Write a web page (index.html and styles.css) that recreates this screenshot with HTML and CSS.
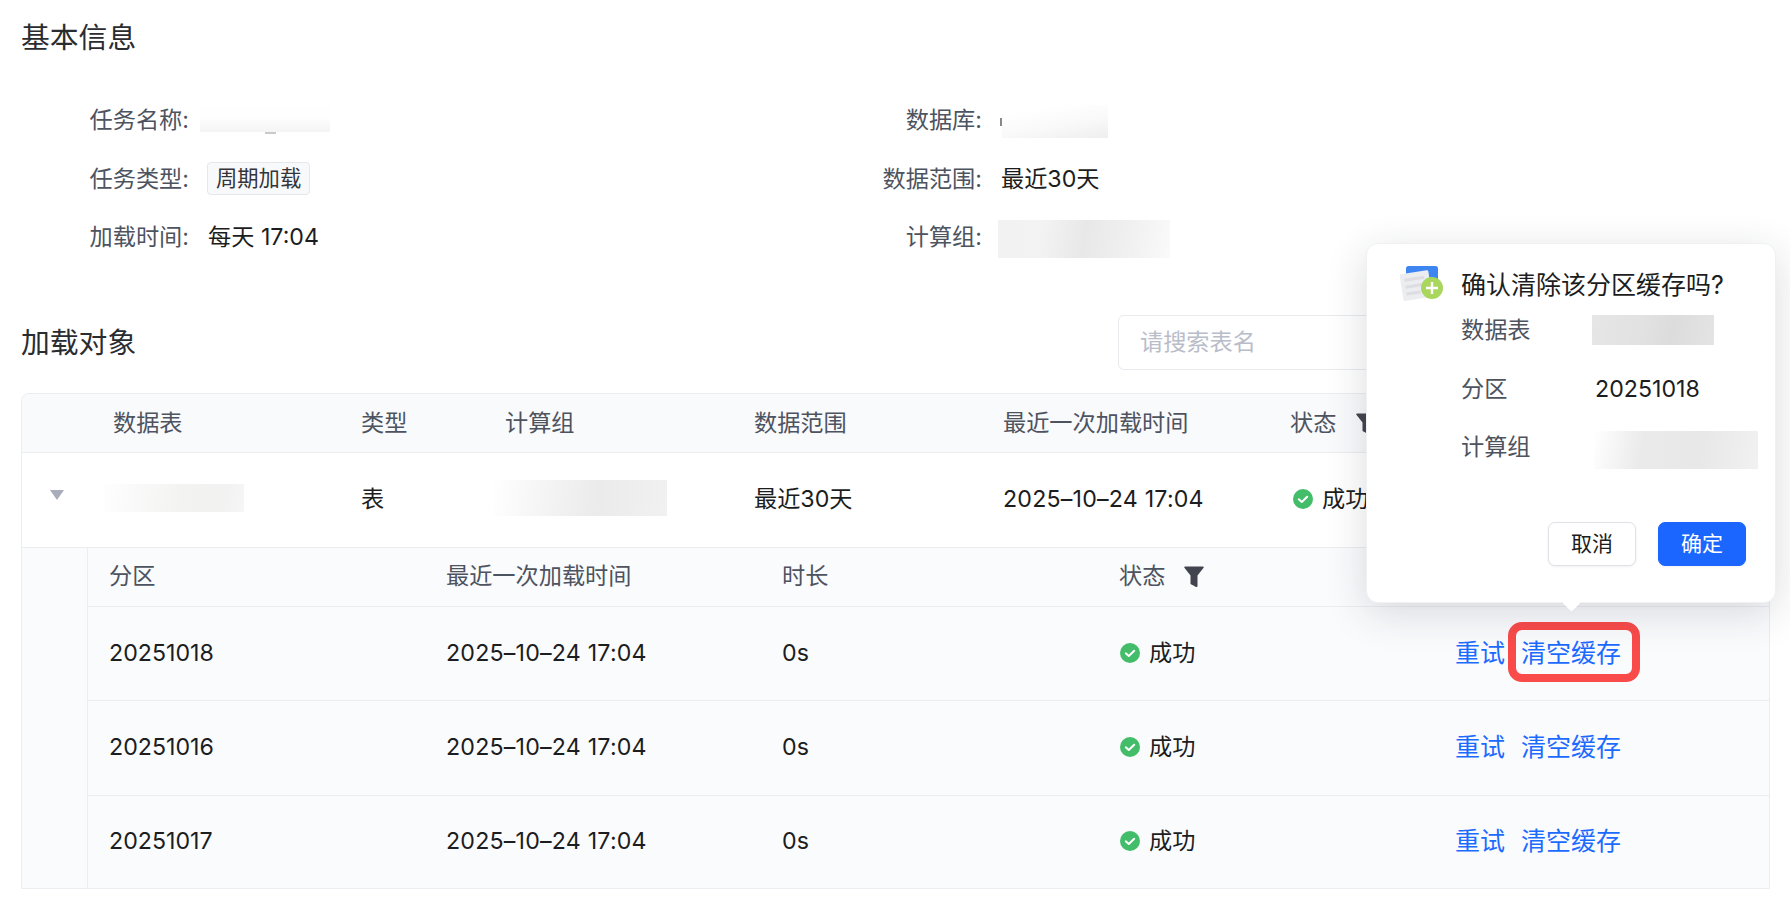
FILE: index.html
```html
<!DOCTYPE html>
<html lang="zh-CN">
<head>
<meta charset="utf-8">
<title>任务详情</title>
<link rel="stylesheet" href="styles.css">
</head>
<body>
<main class="page">
  <h2 class="section-title">基本信息</h2>
  <div class="desc">
    <span class="desc-label">任务名称:</span>
    <div class="desc-value"><span class="blur blur-name"><i class="blur-mark"></i></span></div>
    <span class="desc-label">数据库:</span>
    <div class="desc-value"><span class="blur blur-db"><i class="blur-dot"></i></span></div>
    <span class="desc-label">任务类型:</span>
    <div class="desc-value"><span class="tag">周期加载</span></div>
    <span class="desc-label">数据范围:</span>
    <div class="desc-value">最近30天</div>
    <span class="desc-label">加载时间:</span>
    <div class="desc-value">每天 17:04</div>
    <span class="desc-label">计算组:</span>
    <div class="desc-value"><span class="blur blur-group"></span></div>
  </div>

  <div class="toolbar">
    <h2 class="section-title">加载对象</h2>
    <div class="search">请搜索表名</div>
  </div>

  <section class="table">
    <div class="row row-head main-cols">
      <span></span><span>数据表</span><span>类型</span><span>计算组</span><span>数据范围</span><span>最近一次加载时间</span>
      <span class="status-head">状态<svg class="filter" viewBox="0 0 20 22"><path d="M1 0.5H19a.8.8 0 0 1 .6 1.3L13.5 9.5V20a1 1 0 0 1-1.5.9L7.5 18.5a1 1 0 0 1-1-1V9.5L.4 1.8A.8.8 0 0 1 1 .5Z"/></svg></span>
    </div>
    <div class="row row-main main-cols">
      <span class="expander"></span>
      <span><span class="blur blur-table"></span></span>
      <span>表</span>
      <span><span class="blur blur-table-group"></span></span>
      <span>最近30天</span>
      <span class="time">2025–10–24 17:04</span>
      <span class="status"><svg class="check" viewBox="0 0 20 20"><circle cx="10" cy="10" r="10"/><path d="M5.8 10.3l3 2.7 5.4-5.2"/></svg>成功</span>
    </div>
    <div class="sub">
      <div class="sub-gutter"></div>
      <div class="sub-table">
        <div class="sub-row sub-head sub-cols">
          <span>分区</span><span>最近一次加载时间</span><span>时长</span>
          <span class="status-head">状态<svg class="filter" viewBox="0 0 20 22"><path d="M1 0.5H19a.8.8 0 0 1 .6 1.3L13.5 9.5V20a1 1 0 0 1-1.5.9L7.5 18.5a1 1 0 0 1-1-1V9.5L.4 1.8A.8.8 0 0 1 1 .5Z"/></svg></span>
          <span></span>
        </div>
        <div class="sub-row sub-body sub-cols">
          <span>20251018</span><span class="time">2025–10–24 17:04</span><span>0s</span>
          <span class="status"><svg class="check" viewBox="0 0 20 20"><circle cx="10" cy="10" r="10"/><path d="M5.8 10.3l3 2.7 5.4-5.2"/></svg>成功</span>
          <span class="links"><a>重试</a><a>清空缓存</a></span>
        </div>
        <div class="sub-row sub-body sub-cols">
          <span>20251016</span><span class="time">2025–10–24 17:04</span><span>0s</span>
          <span class="status"><svg class="check" viewBox="0 0 20 20"><circle cx="10" cy="10" r="10"/><path d="M5.8 10.3l3 2.7 5.4-5.2"/></svg>成功</span>
          <span class="links"><a>重试</a><a>清空缓存</a></span>
        </div>
        <div class="sub-row sub-body sub-cols">
          <span>20251017</span><span class="time">2025–10–24 17:04</span><span>0s</span>
          <span class="status"><svg class="check" viewBox="0 0 20 20"><circle cx="10" cy="10" r="10"/><path d="M5.8 10.3l3 2.7 5.4-5.2"/></svg>成功</span>
          <span class="links"><a>重试</a><a>清空缓存</a></span>
        </div>
      </div>
    </div>
  </section>

  <div class="highlight"></div>

  <aside class="popover">
    <div class="pop-title">
      <svg class="pop-icon" viewBox="0 0 46 40">
        <rect x="8" y="3" width="32" height="27" rx="2.5" fill="#3d86f2"/>
        <g transform="rotate(-9 18 20)">
          <rect x="3" y="9" width="29" height="27" rx="1.5" fill="#ecedf0"/>
          <rect x="7" y="14" width="20" height="3" fill="#dcdee2"/>
          <rect x="7" y="21" width="20" height="3" fill="#dcdee2"/>
          <rect x="7" y="28" width="14" height="3" fill="#dcdee2"/>
        </g>
        <circle cx="34" cy="25" r="11" fill="#a9d65c"/>
        <path d="M34 19v12M28 25h12" stroke="#fff" stroke-width="2.4"/>
      </svg>
      <span>确认清除该分区缓存吗?</span>
    </div>
    <div class="pop-fields">
      <span class="pop-label">数据表</span><span><span class="blur blur-pop-table"></span></span>
      <span class="pop-label">分区</span><span class="pop-value">20251018</span>
      <span class="pop-label">计算组</span><span><span class="blur blur-pop-group"></span></span>
    </div>
    <div class="pop-actions">
      <button class="btn">取消</button>
      <button class="btn btn-primary">确定</button>
    </div>
  </aside>
</main>
</body>
</html>
```

FILE: styles.css
```css
* { box-sizing: border-box; }
html, body { margin: 0; background: #fff; }
body {
  font-family: Inter, "Noto Sans CJK SC", sans-serif;
  font-size: 23.2px;
  line-height: 30px;
  color: #1c1d20;
  overflow: hidden;
}
.page {
  position: relative;
  width: 1790px;
  height: 918px;
  padding: 20px 20px 0 21px;
}
.section-title {
  margin: 0;
  font-size: 28.8px;
  font-weight: 400;
  line-height: 36px;
  color: #2a2c30;
}
.desc {
  display: grid;
  grid-template-columns: 168px 587px 168px 1fr;
  grid-auto-rows: 58.5px;
  column-gap: 19px;
  align-items: center;
  margin-top: 34.75px;
}
.desc-label { text-align: right; color: #4e5360; }
.desc-value { display: flex; align-items: center; }
.blur { display: block; position: relative; }
.blur-name {
  width: 130px; height: 29px; margin: -5px 0 0 -8px;
  background: linear-gradient(180deg, #fff 0%, #fdfdfd 55%, #f4f4f4 100%);
}
.blur-mark {
  position: absolute; left: 65px; bottom: -2px;
  width: 11px; height: 2px; background: #c9c9c9;
}
.blur-db {
  width: 106px; height: 33px; margin: 3px 0 0 1px;
  background: linear-gradient(170deg, #fff 20%, #f9f9f9 60%, #eeeeee 100%);
}
.blur-dot {
  position: absolute; left: -2px; top: 13px;
  width: 2px; height: 8px;
  background: #888;
}
.blur-group {
  width: 172px; height: 38px; margin: 4px 0 0 -3px;
  background: linear-gradient(100deg, #f2f2f2 0%, #f3f3f3 25%, #e8e8e8 50%, #f0f0f0 75%, #fafafa 100%);
}
.tag {
  height: 33px;
  padding: 0 8px;
  margin-left: -1px;
  font-size: 21.3px;
  line-height: 31px;
  color: #33353a;
  background: #f8f9fb;
  border: 1px solid #e5e7eb;
  border-radius: 4px;
}
.toolbar {
  display: flex;
  justify-content: space-between;
  align-items: center;
  height: 55px;
  margin-top: 49px;
}
.search {
  width: 320px;
  height: 55px;
  margin-right: 332px;
  padding-left: 21px;
  line-height: 53px;
  color: #b9bdc9;
  background: #fff;
  border: 1px solid #e8eaee;
  border-radius: 6px;
}
.table {
  margin-top: 22.75px;
  width: 1749px;
  height: 496px;
  border: 1px solid #ebedf0;
  border-top-left-radius: 8px;
  border-top-right-radius: 8px;
  overflow: hidden;
}
.time { letter-spacing: 0.2px; }
.row { display: grid; align-items: center; }
.main-cols { grid-template-columns: 91px 248px 144px 249px 249px 289px 1fr; }
.row-head {
  height: 59px;
  background: #f9fafc;
  border-bottom: 1px solid #ebedf0;
  color: #4e5360;
}
.row-head .status-head { margin-left: -2px; gap: 20px; }
.row-main {
  height: 95px;
  padding-bottom: 2px;
  background: #fff;
  border-bottom: 1px solid #ebedf0;
}
.expander {
  width: 0; height: 0;
  margin-left: 28px;
  margin-top: -8px;
  border-left: 7px solid transparent;
  border-right: 7px solid transparent;
  border-top: 10px solid #a9adbb;
}
.blur-table {
  width: 140px; height: 28px; margin: -3px 0 0 -9px;
  background: linear-gradient(100deg, #fefefe 0%, #f8f8f8 30%, #f3f3f1 55%, #f2f2f2 85%, #f6f6f6 100%);
}
.blur-table-group {
  width: 174px; height: 36px; margin: -3px 0 0 -12px;
  background: linear-gradient(100deg, #fff 0%, #f1f1f1 40%, #ebebeb 60%, #f1f1f1 100%);
}
.status-head { display: flex; align-items: center; gap: 19px; }
.filter { width: 20px; height: 22px; fill: #42454f; flex: none; margin-top: 1px; }
.status { display: flex; align-items: center; gap: 9px; padding-left: 1px; }
.check { width: 20px; height: 20px; flex: none; }
.check circle { fill: #43bd6a; }
.check path { fill: none; stroke: #fff; stroke-width: 2; stroke-linecap: round; stroke-linejoin: round; }
.sub { display: flex; height: 340px; background: #fafbfd; }
.sub-gutter { width: 66px; flex: none; border-right: 1px solid #ebedf0; }
.sub-table { flex: 1; }
.sub-row { display: grid; align-items: center; padding-left: 21px; }
.sub-cols { grid-template-columns: 337px 336px 337px 337px 1fr; }
.sub-head {
  height: 59px;
  padding-bottom: 2px;
  border-bottom: 1px solid #ebedf0;
  color: #4e5360;
}
.sub-body { height: 94px; padding-bottom: 2px; border-bottom: 1px solid #ebedf0; }
.sub-body + .sub-body { height: 95px; }
.sub-body:last-child { height: 92px; border-bottom: 0; }
.links { display: flex; gap: 16px; margin-left: -1px; font-size: 25px; color: #1c6bff; }
.highlight {
  position: absolute;
  left: 1508px; top: 622px;
  width: 132px; height: 60px;
  border: 8px solid #f94b4a;
  border-radius: 14px;
}
.popover {
  position: absolute;
  left: 1366px; top: 243px;
  width: 410px; height: 360px;
  padding: 23px 29px 36px 31px;
  display: flex;
  flex-direction: column;
  background: #fff;
  border: 1px solid #f0f1f3;
  border-radius: 12px;
  box-shadow: 0 10px 40px rgba(30, 35, 50, 0.16);
}
.popover::after {
  content: "";
  position: absolute;
  left: 198px; bottom: -7px;
  width: 13px; height: 13px;
  background: #fff;
  transform: rotate(45deg);
  border-radius: 2px;
}
.pop-title { display: flex; align-items: center; gap: 17px; height: 36px; font-size: 25px; color: #1c1d20; }
.pop-icon { width: 46px; height: 40px; flex: none; margin-top: -4px; }
.pop-fields {
  display: grid;
  grid-template-columns: 131px 1fr;
  grid-auto-rows: 58.4px;
  align-items: center;
  padding-left: 63px;
  margin-top: -2px;
}
.pop-label { color: #4e5360; }
.pop-value { padding-left: 3px; }
.blur-pop-table {
  width: 122px; height: 30px;
  background: linear-gradient(100deg, #e6e6e6 0%, #e2e2e2 40%, #dcdcdc 65%, #e4e4e4 100%);
}
.blur-pop-group {
  width: 164px; height: 38px; margin: 6px 0 0 2px;
  background: linear-gradient(100deg, #fff 0%, #eaeaea 30%, #e8e8e8 65%, #f1f1f1 100%);
}
.pop-actions {
  display: flex;
  justify-content: flex-end;
  gap: 22px;
  margin-top: auto;
}
.btn {
  width: 88px;
  height: 44px;
  padding: 0;
  font: inherit;
  font-size: 21px;
  color: #1c1d20;
  background: #fff;
  border: 1px solid #dfe1e6;
  border-radius: 7px;
  box-shadow: 0 1px 3px rgba(0, 0, 0, 0.06);
}
.btn-primary {
  color: #fff;
  background: #1a66ff;
  border-color: #1a66ff;
}
```
